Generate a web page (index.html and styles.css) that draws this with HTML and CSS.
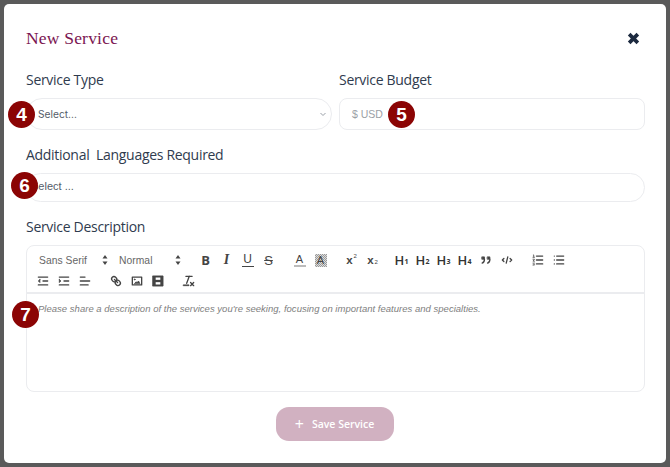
FILE: index.html
```html
<!DOCTYPE html>
<html>
	<head>
		<meta charset="UTF-8">
		<title>New Service</title>
		<link rel="stylesheet" href="styles.css">
	</head>
	<body>
		<div class="modal">
			<div class="head">
				<h2 class="title">New Service</h2>
				<svg class="close" viewBox="0 0 12 12"><path d="M2 2 L10 10 M10 2 L2 10"/></svg>
			</div>

			<div class="two">
				<div class="field">
					<label class="lab">Service Type</label>
					<div class="sel round">
						<span>Select...</span>
						<svg class="chev" viewBox="0 0 8 8"><polyline points="1.5 3 4 5.5 6.5 3"/></svg>
					</div>
				</div>
				<div class="field">
					<label class="lab">Service Budget</label>
					<div class="inp">$ USD</div>
				</div>
			</div>

			<div class="field">
				<label class="lab">Additional&nbsp; Languages Required</label>
				<div class="sel multi"><span>Select ...</span></div>
			</div>

			<div class="field">
				<label class="lab">Service Description</label>
				<div class="editor">
					<div class="toolbar">
						<div class="group">
							<span class="picker p1">Sans Serif<svg class="arr" viewBox="0 0 8 12"><polygon points="4 1 6.5 4.5 1.5 4.5"/><polygon points="4 11 6.5 7.5 1.5 7.5"/></svg></span>
							<span class="picker p2">Normal<svg class="arr" viewBox="0 0 8 12"><polygon points="4 1 6.5 4.5 1.5 4.5"/><polygon points="4 11 6.5 7.5 1.5 7.5"/></svg></span>
						</div>
						<div class="group">
							<span class="btn b">B</span>
							<span class="btn i">I</span>
							<span class="btn u"><span>U</span></span>
							<span class="btn s">S</span>
						</div>
						<div class="group">
							<span class="btn col"><span>A</span></span>
							<span class="btn bgc"><span>A</span></span>
						</div>
						<div class="group scripts">
							<span class="btn sc">x<sup>2</sup></span>
							<span class="btn sc">x<sub>2</sub></span>
						</div>
						<div class="group">
							<span class="btn h">H<sub>1</sub></span>
							<span class="btn h">H<sub>2</sub></span>
							<span class="btn h">H<sub>3</sub></span>
							<span class="btn h">H<sub>4</sub></span>
							<span class="btn"><svg class="ico" viewBox="0 0 18 18"><rect class="fl" height="3" width="3" x="4" y="5"/><rect class="fl" height="3" width="3" x="11" y="5"/><path d="M7,8c0,4.031-3,5-3,5"/><path d="M14,8c0,4.031-3,5-3,5"/></svg></span>
							<span class="btn"><svg class="ico" viewBox="0 0 18 18"><polyline points="5 7 3 9 5 11"/><polyline points="13 7 15 9 13 11"/><line x1="10" x2="8" y1="5" y2="13"/></svg></span>
						</div>
						<div class="group">
							<span class="btn"><svg class="ico" viewBox="0 0 18 18"><line x1="7" x2="15" y1="4" y2="4"/><line x1="7" x2="15" y1="9" y2="9"/><line x1="7" x2="15" y1="14" y2="14"/><line class="thin" x1="2.5" x2="4.5" y1="5.5" y2="5.5"/><path class="thin" d="M3 2.5 L3.5 2.5 L3.5 5"/><path class="thin" d="M2.5 8 L4.5 8 L2.5 10.5 L4.5 10.5"/><path class="thin" d="M2.5 13 L4.5 13 L3.5 14 L4.5 15.5 L2.5 15.5"/></svg></span>
							<span class="btn"><svg class="ico" viewBox="0 0 18 18"><line x1="6" x2="15" y1="4" y2="4"/><line x1="6" x2="15" y1="9" y2="9"/><line x1="6" x2="15" y1="14" y2="14"/><line x1="3" x2="3" y1="4" y2="4"/><line x1="3" x2="3" y1="9" y2="9"/><line x1="3" x2="3" y1="14" y2="14"/></svg></span>
						</div>
						<div class="group">
							<span class="btn"><svg class="ico" viewBox="0 0 18 18"><line x1="3" x2="15" y1="14" y2="14"/><line x1="3" x2="15" y1="4" y2="4"/><line x1="9" x2="15" y1="9" y2="9"/><polygon class="fl" points="5 7 5 11 3 9 5 7"/></svg></span>
							<span class="btn"><svg class="ico" viewBox="0 0 18 18"><line x1="3" x2="15" y1="14" y2="14"/><line x1="3" x2="15" y1="4" y2="4"/><line x1="9" x2="15" y1="9" y2="9"/><polygon class="fl" points="3 7 3 11 5 9 3 7"/></svg></span>
							<span class="btn"><svg class="ico" viewBox="0 0 18 18"><line x1="3" x2="15" y1="9" y2="9"/><line x1="3" x2="13" y1="14" y2="14"/><line x1="3" x2="9" y1="4" y2="4"/></svg></span>
						</div>
						<div class="group">
							<span class="btn"><svg class="ico" viewBox="0 0 18 18"><line x1="7" x2="11" y1="7" y2="11"/><path d="M8.9,4.577a3.476,3.476,0,0,1,.36,4.679A3.476,3.476,0,0,1,4.577,8.9C3.185,7.5,2.035,6.4,4.217,4.217S7.5,3.185,8.9,4.577Z"/><path d="M13.423,9.1a3.476,3.476,0,0,0-4.679-.36,3.476,3.476,0,0,0,.36,4.679c1.392,1.392,2.5,2.542,4.679.36S14.815,10.5,13.423,9.1Z"/></svg></span>
							<span class="btn"><svg class="ico" viewBox="0 0 18 18"><rect height="10" width="12" x="3" y="4"/><circle class="fl" cx="6" cy="7" r="0.6"/><polygon class="fl" points="6 12 8 10 9 11 11 9 12.5 12"/></svg></span>
							<span class="btn"><svg class="ico" viewBox="0 0 18 18"><rect class="fl" height="13" width="13" x="2.5" y="2.5"/><rect class="wh" height="3" width="6" x="6" y="4.5"/><rect class="wh" height="3" width="6" x="6" y="10.5"/></svg></span>
						</div>
						<div class="group">
							<span class="btn"><svg class="ico" viewBox="0 0 18 18"><line x1="5" x2="13" y1="3" y2="3"/><line x1="6" x2="9.35" y1="12" y2="3"/><line x1="11" x2="15" y1="11" y2="15"/><line x1="15" x2="11" y1="11" y2="15"/><rect class="fl" height="1" width="7" x="2" y="14"/></svg></span>
						</div>
					</div>
					<div class="content">Please share a description of the services you're seeking, focusing on important features and specialties.</div>
				</div>
			</div>

			<div class="foot">
				<button class="save"><span class="plus">+</span>Save Service</button>
			</div>

			<span class="badge b4">4</span>
			<span class="badge b5">5</span>
			<span class="badge b6">6</span>
			<span class="badge b7">7</span>
		</div>
	</body>
</html>
```

FILE: styles.css
```css
html, body{margin: 0; padding: 0;}
body{width: 670px; height: 467px; box-sizing: border-box; padding: 4px; background: #5a5a5a; overflow: hidden; font-family: "Open Sans", sans-serif;}

.modal{position: relative; width: 662px; height: 459px; box-sizing: border-box; padding: 0 21px 0 22px; background: #fff; border-radius: 5px;}

.head{display: flex; justify-content: space-between; align-items: center; height: 58px; padding-top: 10px; box-sizing: border-box;}
.title{margin: 0; font: normal 17.5px "Liberation Serif", serif; color: #7a1450; letter-spacing: 0.2px;}
.close{width: 13px; height: 13px; margin-right: 5px; fill: none; stroke: #1c2a3f; stroke-width: 3.4;}

.two{display: grid; grid-template-columns: 306px 306px; column-gap: 7px; margin-bottom: 7px;}
.field{display: flex; flex-direction: column;}
.lab{height: 36px; box-sizing: border-box; padding-bottom: 1px; display: flex; align-items: center; font-size: 14px; letter-spacing: -0.3px; color: #2f3b4e;}

.sel, .inp{display: flex; align-items: center; box-sizing: border-box; border: 1px solid #ebecef; font-family: "Liberation Sans", sans-serif; font-size: 11px;}
.sel{justify-content: space-between; color: #555c68;}
.round{height: 32px; border-radius: 16px; padding: 0 4px 0 11px; font-family: Inter, sans-serif; font-size: 10.2px;}
.chev{width: 8px; height: 8px; fill: none; stroke: #9aa0a8; stroke-width: 1;}
.inp{height: 32px; border-radius: 8px; padding-left: 12px; font-size: 10.5px; color: #9b9fa6;}
.multi{height: 29px; border-radius: 15px; padding: 0 0 3px 4px; margin-bottom: 7px;}

.editor{height: 147px; box-sizing: border-box; border: 1px solid #ebecef; border-radius: 8px; display: flex; flex-direction: column;}
.toolbar{display: flex; flex-wrap: wrap; height: 48px; box-sizing: border-box; padding: 5px 4px 0 5px; border-bottom: 2px solid #ebecef; font-family: "Liberation Sans", sans-serif; color: #444;}
.group{display: flex; margin-right: 10px; height: 18px;}
.scripts{margin-right: 8px;}
.btn{width: 21px; height: 18px; display: flex; align-items: center; justify-content: center; font-size: 12px; color: #444;}
.picker{display: flex; align-items: center; justify-content: space-between; box-sizing: border-box; height: 18px; padding-left: 7px; font-size: 10.3px; letter-spacing: 0.05px; color: #666;}
.p1{width: 81px; padding-right: 4px;}
.p2{width: 72px; padding-left: 6px; padding-right: 3px;}
.arr{width: 8px; height: 12px; fill: #444;}

.b{font-weight: bold; font-size: 13px; font-family: "Open Sans", sans-serif;}
.i{font-style: italic; font-family: "Liberation Serif", serif; font-size: 14px; font-weight: bold;}
.u span{border-bottom: 1.5px solid #444; width: 12px; height: 13px; line-height: 13px; text-align: center; font-size: 12px;}
.s{text-decoration: line-through; font-size: 13px;}
.col span{border-bottom: 2px solid #bbb; width: 12px; height: 11px; line-height: 11px; text-align: center; font-size: 11px;}
.bgc span{width: 12px; height: 13px; display: block; text-align: center; font-size: 11px; line-height: 13px; background: repeating-conic-gradient(#999 0 25%, #ddd 0 50%) 0 0 / 2px 2px;}
.sc{font-size: 11.5px; font-weight: bold;}
.sc sup, .sc sub{font-size: 6px; line-height: 0; font-weight: normal; margin-left: 1px; vertical-align: baseline; position: relative;}
.sc sup{top: -4px;}
.sc sub{top: 2px;}
.h{font-size: 13px; font-weight: 600; font-family: "Open Sans", sans-serif; color: #333;}
.h sub{font-size: 7px; line-height: 0; vertical-align: baseline; position: relative; top: 2px; font-weight: 700;}

.ico{width: 14px; height: 14px; fill: none; stroke: #444; stroke-width: 1.7; stroke-linecap: round; stroke-linejoin: round;}
.ico .fl{fill: #444; stroke: #444; stroke-width: 1;}
.ico .wh{fill: #fff; stroke: none;}
.ico .thin{stroke-width: 1;}

.content{flex: 1; padding: 9px 11px; font: italic 9.5px "Liberation Sans", sans-serif; color: #808080; letter-spacing: 0.02px;}

.foot{display: flex; justify-content: center; padding: 15px 2px 0 0;}
.save{display: flex; align-items: center; justify-content: center; width: 118px; height: 34px; border: 0; border-radius: 13px; background: #d1b1c1; color: #fff; font: 600 10.5px "Open Sans", sans-serif;}
.plus{font-size: 16px; font-weight: 400; margin-right: 8px;}

.badge{position: absolute; width: 27px; height: 27px; border-radius: 50%; background: #8b0404; color: #fff; font: bold 19px/27px "Liberation Sans", sans-serif; text-align: center;}
.b4{left: 4px; top: 97px;}
.b5{left: 384px; top: 97px;}
.b6{left: 7px; top: 168px;}
.b7{left: 8px; top: 297px;}
```
